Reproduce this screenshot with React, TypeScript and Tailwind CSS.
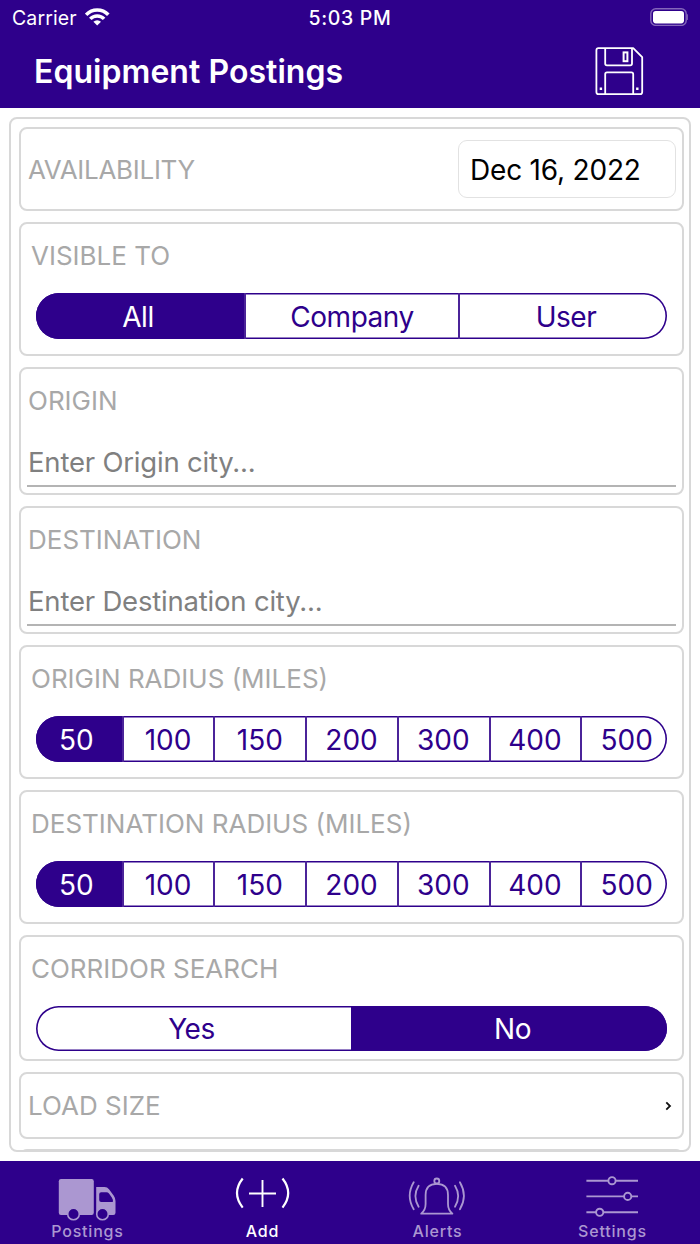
import { useState } from 'react';
import type { ReactNode } from 'react';
import clsx from 'clsx';

const radiusOptions = ['50', '100', '150', '200', '300', '400', '500'];

const WifiIcon = () => (
  <svg className="mb-[3px] h-[19px] w-[27px]" viewBox="0 0 27 19" fill="none" stroke="white" strokeWidth="3.5">
    <path d="M1.1 7.8A15.1 15.1 0 0 1 23.3 7.8" />
    <path d="M5.3 11.9A9.4 9.4 0 0 1 19.1 11.9" />
    <path d="M12.2 18.6L8.4 14.8A5.2 5.2 0 0 1 16 14.8Z" fill="white" stroke="none" />
  </svg>
);

const BatteryIcon = () => (
  <svg className="mb-[2px] h-[18px] w-[38px]" viewBox="0 0 38 18" fill="none">
    <rect x="0.8" y="0.8" width="35.4" height="16.6" rx="5" stroke="#8466ba" strokeWidth="1.4" />
    <rect x="3" y="3" width="31" height="12.4" rx="2.8" fill="white" />
    <path d="M37.3 6.3Q39 9.2 37.3 12Z" fill="#8466ba" stroke="#8466ba" strokeWidth="0.6" />
  </svg>
);

const SaveIcon = () => (
  <svg className="mb-px h-[50px] w-[50px]" viewBox="0 0 50 50" fill="none" stroke="white" strokeWidth="1.8">
    <path d="M4.4 2.2H39.2L48.2 11.2V46Q48.2 48.2 46.2 48.2H4.4Q2.4 48.2 2.4 46V4.2Q2.4 2.2 4.4 2.2Z" strokeLinejoin="round" />
    <path d="M11.2 2.2V17.6Q11.2 19.4 13 19.4H36.2Q38 19.4 38 17.6V2.2" />
    <path d="M11.2 48.2V28.2Q11.2 26.4 13 26.4H37.4Q39.2 26.4 39.2 28.2V48.2" />
    <rect x="29.6" y="6.4" width="3.8" height="8.8" strokeWidth="2" />
    <path d="M5.7 42.7H8.1M42.1 42.7H44.5" strokeWidth="2.4" />
  </svg>
);

const TruckIcon = () => (
  <svg className="mr-[1px] h-12 w-16" viewBox="0 0 64 48" fill="currentColor">
    <path d="M6 5H36.6Q38.8 5 38.8 7.2V38.8Q38.8 41 36.6 41H6Q3.8 41 3.8 38.8V7.2Q3.8 5 6 5Z" />
    <path
      fillRule="evenodd"
      d="M41.2 13H49.5Q52.3 13 54 15.3L58.8 21.8Q60.5 24.2 60.5 27V38.8Q60.5 41 58.3 41H41.2ZM46.2 18.3Q44.2 18.3 44.2 20.3V26Q44.2 28 46.2 28H57.8Q58.3 25.4 56.8 23.4L54 19.6Q53 18.3 51.4 18.3Z"
    />
    <circle cx="18.5" cy="40" r="5.8" fill="#2e008b" stroke="currentColor" strokeWidth="1.6" />
    <circle cx="47.5" cy="40" r="5.8" fill="#2e008b" stroke="currentColor" strokeWidth="1.6" />
  </svg>
);

const AddIcon = () => (
  <svg className="mr-[1px] h-12 w-16" viewBox="0 0 64 48" fill="none" stroke="currentColor" strokeWidth="1.9">
    <path d="M19 19.5H46M32.5 6V33" />
    <path d="M12.7 4.5Q1.3 19 12.7 33.6M52.5 4.5Q63.9 19 52.5 33.6" strokeWidth="2.2" />
  </svg>
);

const BellIcon = () => (
  <svg className="mr-[1px] h-12 w-16" viewBox="0 0 64 48" fill="none" stroke="currentColor" strokeWidth="1.8">
    <path d="M16.2 39.7Q20.6 36 20.6 30V21Q20.6 9.8 31.8 9.8Q43 9.8 43 21V30Q43 36 47.4 39.7Z" strokeLinejoin="round" />
    <circle cx="31.8" cy="7" r="2.5" />
    <path d="M13.6 11.7Q7.2 22 13.6 32.8M8.7 8.3Q0.7 21.8 8.7 35.3" strokeLinecap="round" />
    <path d="M50 11.7Q56.4 22 50 32.8M54.9 8.3Q62.9 21.8 54.9 35.3" strokeLinecap="round" />
  </svg>
);

const SlidersIcon = () => (
  <svg className="mr-[1px] h-12 w-16" viewBox="0 0 64 48" fill="#2e008b" stroke="currentColor" strokeWidth="1.9">
    <path d="M6.4 6.7H58M6.4 22.4H58M6.4 38.3H58" />
    <circle cx="32" cy="6.7" r="3.6" />
    <circle cx="47.7" cy="22.4" r="3.6" />
    <circle cx="19.7" cy="38.3" r="3.6" />
  </svg>
);

const Card = ({ className, children }: { className?: string; children?: ReactNode }) => (
  <section className={clsx('shrink-0 rounded-[8px] border-2 border-[#d8d8d8]', className)}>{children}</section>
);

const Label = ({ tight, children }: { tight?: boolean; children: ReactNode }) => (
  <h2 className={clsx('text-[26px] leading-[30px] text-[#a8a8a8]', tight && 'pt-px tracking-[-0.3px]')}>
    {children}
  </h2>
);

interface SegmentedProps {
  label: string;
  options: string[];
  initial: string;
  className?: string;
  // numeric options keep the default letter spacing
  numeric?: boolean;
  trackClassName?: string;
}

const Segmented = ({ label, options, initial, className, numeric, trackClassName = 'h-[46px]' }: SegmentedProps) => {
  const [selected, setSelected] = useState(initial);

  return (
    <Card className={clsx('pt-[17px] pr-[15px] pl-[15px]', className)}>
      <div className="-ml-[5px]">
        <Label>{label}</Label>
      </div>
      <div
        className={clsx(
          'mt-[22px] overflow-hidden rounded-full shadow-[inset_0_0_0_1.6px_#2e008b]',
          trackClassName,
        )}
      >
        <div className="-mr-[5px] -ml-[4px] flex h-full">
          {options.map((option) => (
            <button
              key={option}
              onClick={() => setSelected(option)}
              className={clsx(
                'flex-1 basis-0 border-l-2 text-[28px] leading-[46px] first:border-l-0',
                numeric ? 'pr-px' : 'tracking-[-0.5px]',
                options.length > 2 && 'pt-px',
                option === selected
                  ? 'border-[#2e008b] bg-[#2e008b] text-white'
                  : 'border-[#4b2499] text-[#2e008b]',
              )}
            >
              {option}
            </button>
          ))}
        </div>
      </div>
    </Card>
  );
};

const CityField = ({ label, placeholder }: { label: string; placeholder: string }) => (
  <Card className="h-[128px] px-[6px] pt-[17px]">
    <div className="pl-px">
      <Label>{label}</Label>
    </div>
    <input
      placeholder={placeholder}
      className="mt-[22px] h-[49px] w-full border-b-2 border-[#b4b4b4] pt-px pl-px text-[27.5px] tracking-[-0.2px] outline-none placeholder:text-[#808080]"
    />
  </Card>
);

const tabs = [
  { name: 'Postings', icon: <TruckIcon /> },
  { name: 'Add', icon: <AddIcon /> },
  { name: 'Alerts', icon: <BellIcon /> },
  { name: 'Settings', icon: <SlidersIcon /> },
];

const App = () => {
  const [activeTab, setActiveTab] = useState('Add');

  return (
    <div className="flex h-[1244px] w-[700px] flex-col overflow-hidden bg-white font-['Inter','Liberation_Sans',sans-serif]">
      <header className="h-[108px] shrink-0 bg-[#2e008b] text-white">
        <div className="grid h-9 grid-cols-3 items-center pr-3 pl-3 text-[19.5px]">
          <div className="flex items-center gap-2">
            <span className="pt-[2px] tracking-[0.1px]">Carrier</span>
            <WifiIcon />
          </div>
          <div className="pt-[2px] text-center font-medium tracking-[0.7px]">5:03 PM</div>
          <div className="flex justify-end">
            <BatteryIcon />
          </div>
        </div>
        <div className="flex h-[70px] items-center justify-between pr-[56px] pl-[34px]">
          <h1 className="pt-[2px] text-[32px] font-semibold tracking-[0.05px]">Equipment Postings</h1>
          <SaveIcon />
        </div>
      </header>

      <main className="mt-[9px] mr-[9px] ml-[9px] flex h-[1035px] shrink-0 flex-col gap-[11px] overflow-hidden rounded-[8px] border-2 border-[#d8d8d8] pt-2 pr-[5px] pl-2">
        <Card className="flex h-[84px] items-center justify-between pr-[6px] pl-[7px]">
          <Label tight>AVAILABILITY</Label>
          <div className="flex h-[58px] w-[218px] items-center rounded-[9px] border border-[#e2e2e2] pt-[2px] pl-[11px] text-[28px] tracking-[-0.2px] text-black">
            Dec 16, 2022
          </div>
        </Card>
        <Segmented label="VISIBLE TO" options={['All', 'Company', 'User']} initial="All" className="h-[134px]" />
        <CityField label="ORIGIN" placeholder="Enter Origin city..." />
        <CityField label="DESTINATION" placeholder="Enter Destination city..." />
        <Segmented label="ORIGIN RADIUS (MILES)" options={radiusOptions} initial="50" className="h-[134px]" numeric />
        <Segmented
          label="DESTINATION RADIUS (MILES)"
          options={radiusOptions}
          initial="50"
          className="h-[134px]"
          numeric
        />
        <Segmented
          label="CORRIDOR SEARCH"
          options={['Yes', 'No']}
          initial="No"
          className="h-[126px]"
          trackClassName="h-[45px]"
        />
        <Card className="flex h-[67px] items-center justify-between pr-[10px] pl-[7px]">
          <Label>LOAD SIZE</Label>
          <svg className="h-[10px] w-[7px]" viewBox="0 0 7 10" fill="none" stroke="#111" strokeWidth="1.8">
            <path d="M1.3 1.3L5 5L1.3 8.7" />
          </svg>
        </Card>
        <Card className="-mt-px h-[67px]" />
      </main>

      <nav className="mt-[9px] grid flex-1 grid-cols-4 bg-[#2e008b]">
        {tabs.map((tab) => (
          <button
            key={tab.name}
            onClick={() => setActiveTab(tab.name)}
            className={clsx(
              'flex flex-col items-center pt-[13px]',
              tab.name === activeTab ? 'text-white' : 'text-[#ab97d1]',
            )}
          >
            {tab.icon}
            <span className="text-[16px] leading-[18px] font-medium tracking-[0.8px]">{tab.name}</span>
          </button>
        ))}
      </nav>
    </div>
  );
};

export default App;
